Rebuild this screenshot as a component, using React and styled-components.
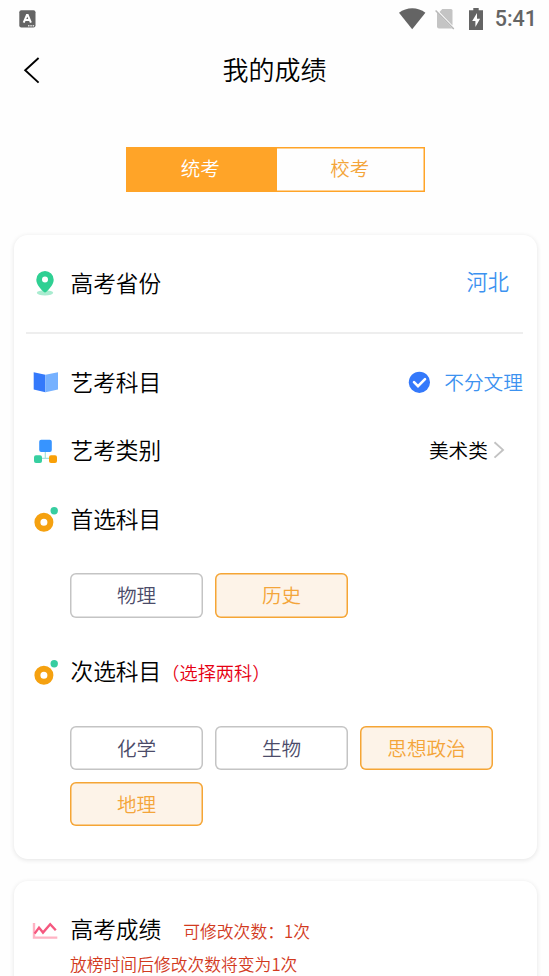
import React from 'react';
import styled, { createGlobalStyle } from 'styled-components';

const sections = {
    first: [
        { name: '物理' },
        { name: '历史', active: true },
    ],
    second: [
        { name: '化学' },
        { name: '生物' },
        { name: '思想政治', active: true },
        { name: '地理', active: true },
    ],
};

function StatusBar() {
    return (
        <StyledStatusBar>
            <svg width="17" height="18" viewBox="0 0 17 18">
                <rect x="0.3" y="0.3" width="16.2" height="17.2" rx="2" fill="#646464" />
                <path d="M4.7 12.7 7.9 5h.8l3.2 7.7M6 10.1h4.7" fill="none" stroke="#fff" strokeWidth="2" />
                <path d="M9 15.8h6.3" stroke="#ddd" strokeWidth="1.5" strokeDasharray="1.5 .8" />
            </svg>
            <StatusIcons>
                <svg width="27" height="22" viewBox="0 0 27 22">
                    <path d="M0 4.8C7.5-1.3 19-1.3 26.4 4.8L13.2 21.2Z" fill="#646464" />
                </svg>
                <svg width="20" height="22" viewBox="0 0 20 22">
                    <path d="M7.3 1H16Q17.5 1 17.5 2.5V17.4L4.5 4Z" fill="#c4c4c4" />
                    <path d="M2 4.5V18.5Q2 20.5 4 20.5H17Z" fill="#c4c4c4" />
                    <path d="M.6 2.4 18.8 21" stroke="#b8b8b8" strokeWidth="1.5" />
                </svg>
                <svg width="14" height="22" viewBox="0 0 14 22">
                    <path d="M4.3 0h5.4v2.2H14V22H0V2.2h4.3Z" fill="#646464" />
                    <path d="M8 5 3.2 13h3.2v6l4.7-8.3H8Z" fill="#fff" />
                </svg>
                <Clock>5:41</Clock>
            </StatusIcons>
        </StyledStatusBar>
    );
}

function PinIcon() {
    return (
        <svg width="26" height="26" viewBox="0 0 26 26">
            <ellipse cx="13" cy="22.8" rx="8.2" ry="2.6" fill="#a9ecd0" />
            <path d="M13 1a8.7 8.7 0 0 1 8.7 8.7c0 4.7-4.5 9.3-7.3 12.1q-1.4 1.2-2.8 0C8.8 19 4.3 14.4 4.3 9.7A8.7 8.7 0 0 1 13 1Z" fill="#2fd093" />
            <circle cx="13" cy="9.6" r="3" fill="#fff" />
        </svg>
    );
}

function BookIcon() {
    return (
        <svg width="26" height="26" viewBox="0 0 26 26">
            <path d="M1.7 3.2 13.4 5.8V23.3L1.7 20.6Z" fill="#3479fb" />
            <path d="M13.4 5.8 26 3.2V20.6L13.4 23.3Z" fill="#76b1ff" />
        </svg>
    );
}

function TreeIcon() {
    return (
        <svg width="26" height="26" viewBox="0 0 26 26">
            <path d="M13.3 13v7.3M7 20.3h13" fill="none" stroke="#a5e3dc" strokeWidth="1.2" />
            <rect x="7.2" y="1.7" width="12.6" height="12.4" rx="2" fill="#3794ff" />
            <rect x="2" y="17.3" width="8" height="7.7" rx="2" fill="#37cfa0" />
            <rect x="17" y="17.3" width="8" height="7.7" rx="2" fill="#f9a008" />
        </svg>
    );
}

function RingIcon() {
    return (
        <svg width="26" height="26" viewBox="0 0 26 26">
            <circle cx="11.9" cy="16.2" r="6.5" fill="none" stroke="#f5a110" strokeWidth="6" />
            <circle cx="22.2" cy="4.7" r="3.7" fill="#37cda0" />
        </svg>
    );
}

function ChartIcon() {
    return (
        <svg width="26" height="26" viewBox="0 0 26 26">
            <path d="M2 6v14.6h23.3" fill="none" stroke="#ffb3c4" strokeWidth="2.4" />
            <path d="M2.6 16.6 7 10.6l4 5 7.2-8.4 5.6 6" fill="none" stroke="#f5587f" strokeWidth="2.4" />
        </svg>
    );
}

function Options({ items }) {
    return (
        <OptionList>
            {items.map((item) => (
                <Option key={item.name} $active={item.active}>{item.name}</Option>
            ))}
        </OptionList>
    );
}

function App() {
    return (
        <Page>
            <GlobalStyle />
            <StatusBar />
            <Header>
                <BackButton aria-label="返回">
                    <svg width="18" height="28" viewBox="0 0 18 28">
                        <path d="M15.6 2 2.2 14.3 15.6 26.6" fill="none" stroke="#000" strokeWidth="1.9" />
                    </svg>
                </BackButton>
                <Title>我的成绩</Title>
            </Header>
            <Tabs>
                <Tab $active>统考</Tab>
                <Tab>校考</Tab>
            </Tabs>
            <Card>
                <ProvinceRow>
                    <PinIcon />
                    <Label>高考省份</Label>
                    <Province>河北</Province>
                </ProvinceRow>
                <Row>
                    <BookIcon />
                    <Label>艺考科目</Label>
                    <Checked>
                        <svg width="22" height="22" viewBox="0 0 22 22">
                            <circle cx="11.4" cy="11.3" r="10.6" fill="#3479fb" />
                            <path d="m6 11.1 4 4 7-7" fill="none" stroke="#fff" strokeWidth="2.6" strokeLinecap="round" />
                        </svg>
                        <span>不分文理</span>
                    </Checked>
                </Row>
                <Row>
                    <TreeIcon />
                    <Label>艺考类别</Label>
                    <Picker>
                        <span>美术类</span>
                        <svg width="12" height="20" viewBox="0 0 12 20">
                            <path d="m1.5 1.2 8.5 7.7-8.5 7.7" fill="none" stroke="#c2c2c2" strokeWidth="1.9" />
                        </svg>
                    </Picker>
                </Row>
                <Row>
                    <RingIcon />
                    <Label>首选科目</Label>
                </Row>
                <Options items={sections.first} />
                <Row>
                    <RingIcon />
                    <Label>次选科目</Label>
                    <Hint>（选择两科）</Hint>
                </Row>
                <Options items={sections.second} />
            </Card>
            <Card>
                <ScoreRow>
                    <ChartIcon />
                    <Label>高考成绩</Label>
                    <Remaining>可修改次数：1次</Remaining>
                </ScoreRow>
                <Notice>放榜时间后修改次数将变为1次</Notice>
            </Card>
        </Page>
    );
}

const GlobalStyle = createGlobalStyle`
    * {
        box-sizing: border-box;
    }
    body {
        margin: 0;
        background: #fefefe;
        overflow: hidden;
    }
    svg {
        display: block;
        flex: none;
    }
`;

const Page = styled.div`
    height: 976px;
    overflow: hidden;
    color: #000;
    font-family: "Noto Sans CJK SC", sans-serif;
    font-weight: 350;
    white-space: nowrap;
`;

const StyledStatusBar = styled.div`
    display: flex;
    align-items: center;
    justify-content: space-between;
    height: 37px;
    padding: 0 12px 0 19px;
`;

const StatusIcons = styled.div`
    display: flex;
    align-items: center;

    svg:nth-child(2) {
        margin: 0 14px 0 9px;
    }
`;

const Clock = styled.span`
    margin-left: 12px;
    color: #646464;
    font: 500 21.5px/37px Roboto, sans-serif;
`;

const Header = styled.header`
    display: grid;
    grid-template-columns: 60px 1fr 60px;
    align-items: center;
    height: 66px;
`;

const BackButton = styled.button`
    margin: 0;
    padding: 0 0 0 23px;
    border: 0;
    background: none;
`;

const Title = styled.h1`
    margin: 0;
    padding-bottom: 2px;
    font-size: 26px;
    font-weight: inherit;
    line-height: 64px;
    text-align: center;
`;

const Tabs = styled.div`
    display: flex;
    width: 299px;
    height: 45px;
    margin: 44px 0 43px 126.4px;
    box-shadow: inset 0 0 0 1.5px #ffa428;
`;

const Tab = styled.div`
    width: ${(props) => (props.$active ? '150.5px' : '148.5px')};
    padding-right: 3px;
    font-size: 19.5px;
    line-height: 42px;
    text-align: center;
    color: ${(props) => (props.$active ? '#fff' : '#f4a53a')};
    background: ${(props) => (props.$active ? '#ffa428' : 'transparent')};
`;

const Card = styled.section`
    margin: 0 12px 22px 14px;
    padding-bottom: 13px;
    border-radius: 14px;
    background: #fff;
    box-shadow: 0 1px 5px rgba(0, 0, 0, 0.11);
`;

const Row = styled.div`
    display: flex;
    align-items: center;
    height: 68.6px;
    padding: 0 14px 0 18px;
`;

const ProvinceRow = styled(Row)`
    height: 98.5px;
    margin: 0 14px 14.5px 12px;
    padding: 0 14px 0 6px;
    border-bottom: 2px solid #eee;
`;

const ScoreRow = styled(Row)`
    height: 70px;
    padding-top: 27px;
`;

const Label = styled.span`
    margin-left: 12.5px;
    padding-bottom: 1px;
    font-size: 22.7px;
    line-height: 32px;
`;

const Province = styled.span`
    margin-left: auto;
    padding-bottom: 5px;
    font-size: 21.2px;
    line-height: 30px;
    color: #3c92f0;
`;

const Checked = styled.span`
    display: flex;
    align-items: center;
    gap: 14px;
    margin-left: auto;
    font-size: 19.7px;
    color: #3c92f0;

    span {
        padding-bottom: 2px;
    }
`;

const Picker = styled.span`
    display: flex;
    align-items: center;
    gap: 5px;
    margin: 0 18px 0 auto;
    font-size: 19.7px;

    span {
        padding-bottom: 2px;
    }
`;

const OptionList = styled.div`
    display: flex;
    flex-wrap: wrap;
    gap: 12px;
    padding: 19.5px 0 20px 56px;
`;

const Option = styled.div`
    width: 133px;
    height: 44.3px;
    box-shadow: inset 0 0 0 1.5px ${(props) => (props.$active ? '#f5a535' : '#c4c4c4')};
    border-radius: 6px;
    font-size: 19.6px;
    line-height: 43px;
    text-align: center;
    color: ${(props) => (props.$active ? '#f4a53a' : '#4b4b69')};
    background: ${(props) => (props.$active ? '#fdf3e8' : '#fff')};
`;

const Hint = styled.span`
    font-size: 18.2px;
    color: #e60012;
`;

const Remaining = styled.span`
    margin: 3px 0 0 22px;
    font-size: 16.8px;
    color: #d23a1e;
`;

const Notice = styled.p`
    margin: 0 0 0 56px;
    font-size: 16.8px;
    line-height: 26px;
    color: #d23a1e;
`;

export default App;
